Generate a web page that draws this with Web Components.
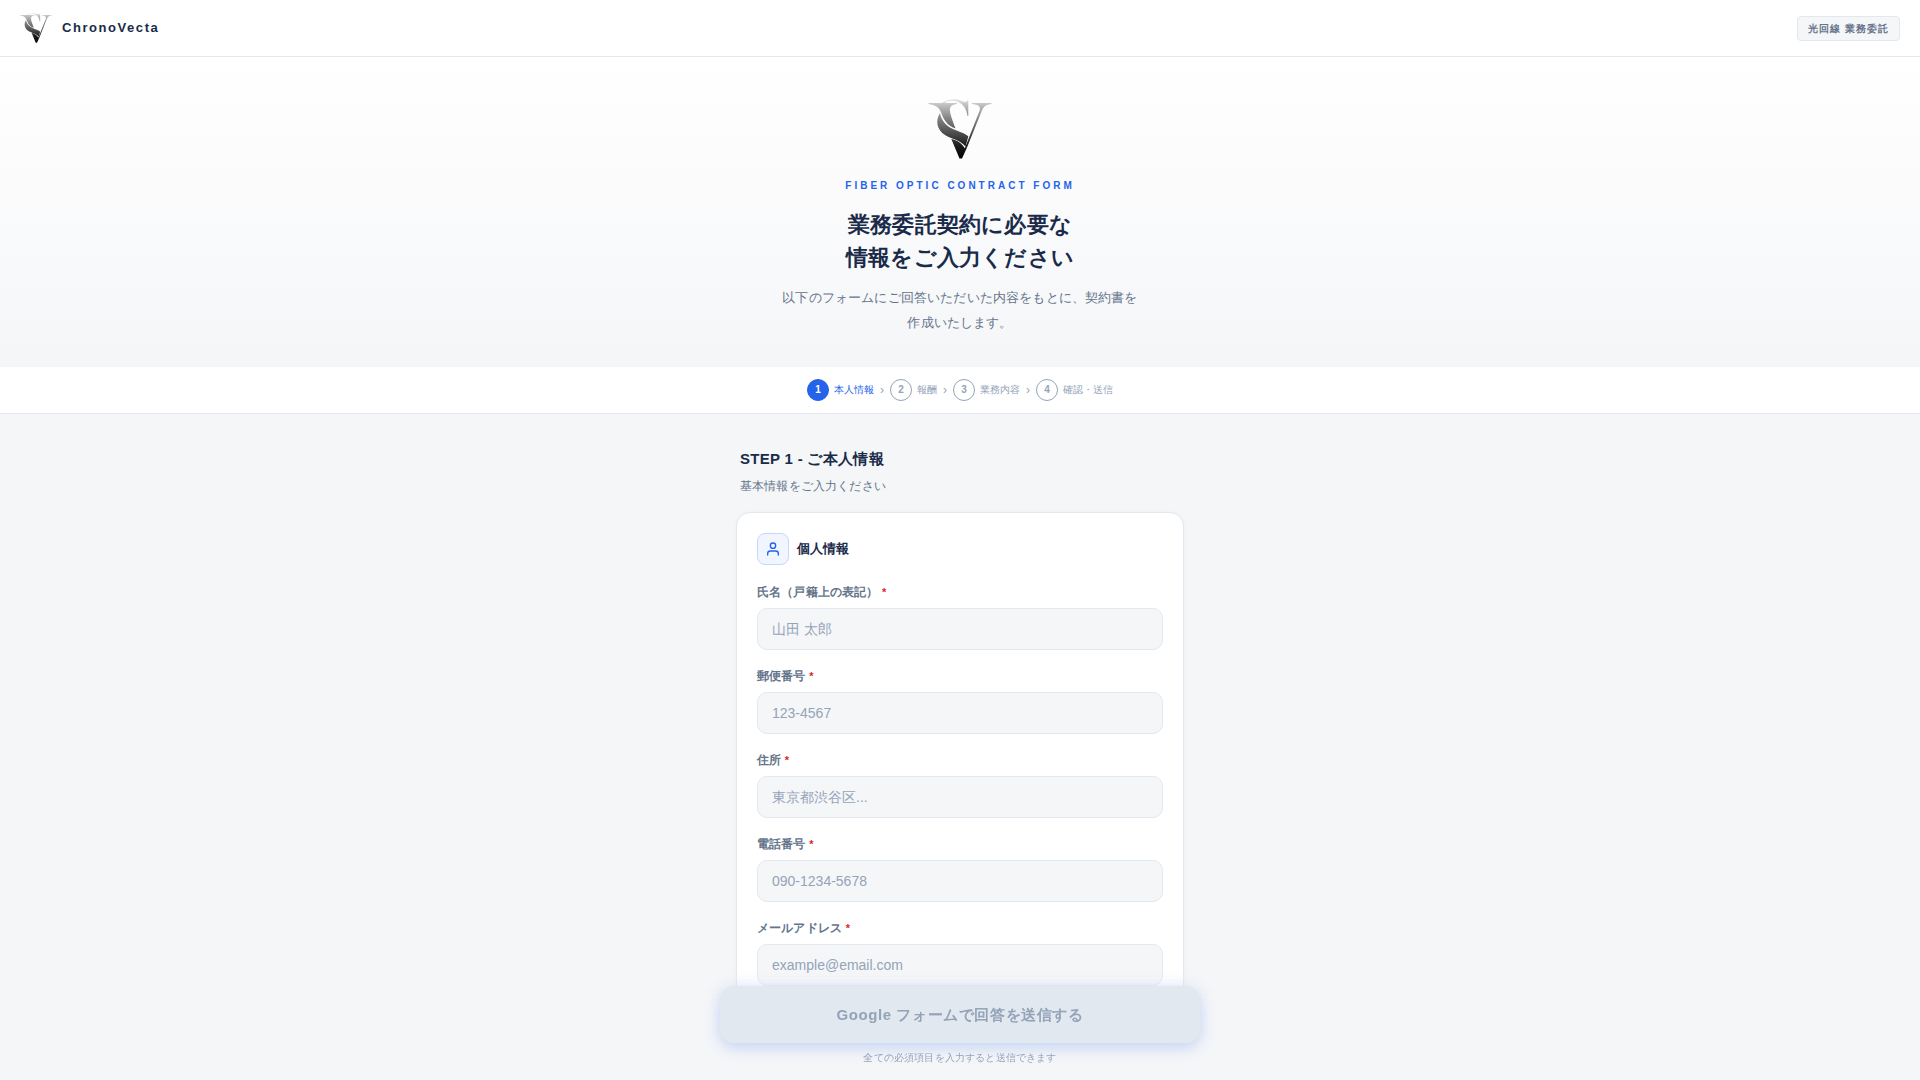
<!DOCTYPE html>
<html lang="ja">
<head>
<meta charset="utf-8">
<meta name="viewport" content="width=device-width, initial-scale=1">
<title>ChronoVecta</title>
<style>
  :root {
    --navy: #1a2b4a;
    --slate: #64748b;
    --muted: #94a3b8;
    --line: #e2e8f0;
    --bg: #f5f6f8;
    --blue: #2563eb;
  }
  body {
    margin: 0;
    background: var(--bg);
    color: var(--navy);
    font-family: "Liberation Sans", sans-serif;
    letter-spacing: 0.01em;
  }
</style>
</head>
<body>
<contract-page></contract-page>

<script>
const define = (name, html, setup) => {
  const template = document.createElement("template");
  template.innerHTML = html;
  customElements.define(name, class extends HTMLElement {
    constructor() {
      super();
      this.attachShadow({ mode: "open" }).append(template.content.cloneNode(true));
    }
    connectedCallback() {
      if (setup) setup(this, this.shadowRoot);
    }
  });
};

define("brand-mark", `
  <style>
    :host { display: block; width: 32px; height: 32px; flex: none; }
    :host([large]) { width: 64px; height: 64px; }
    svg { display: block; width: 100%; height: 100%; }
  </style>
  <svg viewBox="0 0 64 64" aria-hidden="true">
    <defs>
      <linearGradient id="g" gradientUnits="userSpaceOnUse" x1="0" y1="1" x2="0" y2="62">
        <stop offset="0" stop-color="#f0f0f0"/>
        <stop offset="0.1" stop-color="#c4c4c4"/>
        <stop offset="0.35" stop-color="#808080"/>
        <stop offset="0.6" stop-color="#484848"/>
        <stop offset="0.78" stop-color="#1c1c1c"/>
        <stop offset="1" stop-color="#000"/>
      </linearGradient>
    </defs>
    <g fill="url(#g)">
      <path d="M0.500 6H29V7C24 7.500 21.500 9.500 22 14C22.500 19 25.500 26 27.500 31.500C19 28.500 16 23 13.500 16.500C11.500 11 8.500 8 0.500 7Z"/>
      <path d="M14 6C20 2 28 1 34 4C37 5.500 39 5 39.500 3H40.300V19H39.500C38.500 12 35 5.500 27 4C22.500 3.300 18.500 4 16.500 6Z"/>
      <path d="M12 16C13 23 18 29 25 32C31 34.700 37 36 40.300 39.500L37.500 49.500C32 42.500 24 42.500 17 38C9 33 7 23.500 12 16Z"/>
      <path d="M23.300 42C29 43.200 33.500 46 36.800 51.200L38 49L38.800 51L34 61.500H31.500Z"/>
      <path d="M44 6H63.500V7C58 7.500 55.500 9.500 53.500 14.500L38.800 51L37.500 49.500L51.500 14C53 9.500 50.500 7.500 44 7Z"/>
    </g>
  </svg>`);

define("site-header", `
  <style>
    :host {
      display: flex; align-items: center; justify-content: space-between;
      padding: 12px 20px; background: #fff; border-bottom: 1px solid var(--line);
    }
    .brand { display: flex; align-items: center; gap: 10px; }
    .name { font-size: 13px; line-height: 20px; font-weight: 700; letter-spacing: 0.12em; }
    .tag {
      padding: 4px 10px; border: 1px solid var(--line); border-radius: 4px; background: var(--bg);
      color: var(--slate); font-size: 10px; line-height: 15px; font-weight: 600; letter-spacing: 1px;
    }
  </style>
  <div class="brand"><brand-mark></brand-mark><span class="name"><slot></slot></span></div>
  <span class="tag"><slot name="tag"></slot></span>`);

define("page-hero", `
  <style>
    :host {
      display: flex; flex-direction: column; align-items: center; text-align: center;
      padding: 40px 24px 32px; background: linear-gradient(180deg, #fff, var(--bg));
    }
    .eyebrow {
      margin: 17px 0 14px; color: var(--blue);
      font-size: 10px; line-height: 16px; font-weight: 700; letter-spacing: 3px;
    }
    h1 { margin: 0 0 11px; font-size: 22px; line-height: 33px; font-weight: 700; letter-spacing: 0.01em; }
    .lead { margin: 0; max-width: 360px; color: var(--slate); font-size: 13px; line-height: 25px; }
  </style>
  <brand-mark large></brand-mark>
  <p class="eyebrow"><slot name="eyebrow"></slot></p>
  <h1><slot name="title"></slot></h1>
  <p class="lead"><slot></slot></p>`);

define("step-item", `
  <style>
    :host {
      display: flex; align-items: center; gap: 5px;
      color: var(--muted); font-size: 10px; line-height: 16px; letter-spacing: 0;
    }
    :host([active]) { color: var(--blue); }
    .dot {
      display: grid; place-items: center; box-sizing: border-box; width: 22px; height: 22px;
      border: 1px solid currentColor; border-radius: 50%; font-weight: 700;
    }
    :host([active]) .dot { background: var(--blue); border-color: var(--blue); color: #fff; }
  </style>
  <span class="dot"></span><span><slot></slot></span>`,
  (el, root) => { root.querySelector(".dot").textContent = el.getAttribute("number"); });

define("step-bar", `
  <style>
    :host {
      display: flex; align-items: center; justify-content: center; gap: 6px;
      padding: 12px 20px; background: #fff; border-bottom: 1px solid var(--line);
      color: var(--muted);
    }
    .sep { font-size: 12px; line-height: 16px; letter-spacing: 0; }
  </style>
  <step-item number="1" active>本人情報</step-item><span class="sep">›</span>
  <step-item number="2">報酬</step-item><span class="sep">›</span>
  <step-item number="3">業務内容</step-item><span class="sep">›</span>
  <step-item number="4">確認・送信</step-item>`);

define("form-field", `
  <style>
    :host { display: flex; flex-direction: column; gap: 6px; }
    label { color: var(--slate); font-size: 12px; line-height: 20px; font-weight: 600; }
    .req { color: #dc2626; font-size: 11px; }
    input {
      box-sizing: border-box; width: 100%; height: 42px; margin: 0; padding: 0 14px;
      border: 1px solid var(--line); border-radius: 10px; background: var(--bg);
      color: var(--navy); font-family: inherit; font-size: 14px; outline: none;
    }
    input::placeholder { color: var(--muted); opacity: 1; }
    input:focus { border-color: var(--blue); }
  </style>
  <label for="field"><slot></slot> <span class="req">*</span></label>
  <input id="field" required>`,
  (el, root) => {
    const input = root.querySelector("input");
    input.type = el.getAttribute("type") || "text";
    input.placeholder = el.getAttribute("placeholder");
  });

define("form-card", `
  <style>
    :host {
      display: flex; flex-direction: column; gap: 16px; padding: 20px;
      border: 1px solid var(--line); border-radius: 14px; background: #fff;
      box-shadow: 0 1px 4px rgba(26, 43, 74, 0.04);
    }
    header { display: flex; align-items: center; gap: 8px; margin-bottom: 1px; }
    .icon {
      display: grid; place-items: center; box-sizing: border-box; width: 32px; height: 32px;
      border: 1px solid #c7d7fb; border-radius: 8px; background: #f0f5ff;
    }
    svg { display: block; width: 16px; height: 16px; }
    h3 { margin: 0; font-size: 13px; line-height: 20px; font-weight: 700; letter-spacing: 0; }
  </style>
  <header>
    <span class="icon">
      <svg viewBox="0 0 24 24" fill="none" stroke="#2563eb" stroke-width="2" stroke-linecap="round" stroke-linejoin="round" aria-hidden="true">
        <path d="M20 21v-2a4 4 0 0 0-4-4H8a4 4 0 0 0-4 4v2"/><circle cx="12" cy="7" r="4"/>
      </svg>
    </span>
    <h3><slot name="title"></slot></h3>
  </header>
  <slot></slot>`);

define("form-section", `
  <style>
    :host { display: block; box-sizing: border-box; max-width: 480px; margin: 0 auto; padding: 33px 16px 140px; }
    .head { padding: 0 4px; margin-bottom: 16px; }
    h2 { margin: 0 0 5px; font-size: 15px; line-height: 24px; font-weight: 700; letter-spacing: 0.02em; }
    p { margin: 0; color: var(--slate); font-size: 12px; line-height: 20px; }
  </style>
  <div class="head"><h2><slot name="title"></slot></h2><p><slot name="note"></slot></p></div>
  <slot></slot>`);

define("submit-bar", `
  <style>
    :host {
      display: flex; flex-direction: column; align-items: center; gap: 7px;
      position: fixed; left: 0; right: 0; bottom: 0; padding: 16px 16px 14px;
      background: linear-gradient(to top, var(--bg) 60%, transparent);
    }
    button {
      width: 100%; max-width: 480px; padding: 18px; border: 0; border-radius: 14px;
      background: var(--line); color: var(--muted); box-shadow: 0 4px 16px rgba(37, 99, 235, 0.25);
      font-family: inherit; font-size: 15px; line-height: 21px; font-weight: 700; letter-spacing: 0.04em;
    }
    p { margin: 0; color: var(--muted); font-size: 10px; line-height: 16px; }
  </style>
  <button type="submit" disabled><slot></slot></button>
  <p><slot name="note"></slot></p>`);

define("contract-page", `
  <style>:host { display: block; }</style>
  <site-header>ChronoVecta<span slot="tag">光回線 業務委託</span></site-header>
  <page-hero>
    <span slot="eyebrow">FIBER OPTIC CONTRACT FORM</span>
    <span slot="title">業務委託契約に必要な<br>情報をご入力ください</span>
    以下のフォームにご回答いただいた内容をもとに、契約書を作成いたします。
  </page-hero>
  <step-bar></step-bar>
  <form-section>
    <span slot="title">STEP 1 - ご本人情報</span>
    <span slot="note">基本情報をご入力ください</span>
    <form-card>
      <span slot="title">個人情報</span>
      <form-field placeholder="山田 太郎">氏名（戸籍上の表記）</form-field>
      <form-field placeholder="123-4567">郵便番号</form-field>
      <form-field placeholder="東京都渋谷区...">住所</form-field>
      <form-field type="tel" placeholder="090-1234-5678">電話番号</form-field>
      <form-field type="email" placeholder="example@email.com">メールアドレス</form-field>
    </form-card>
  </form-section>
  <submit-bar>Google フォームで回答を送信する<span slot="note">全ての必須項目を入力すると送信できます</span></submit-bar>`);
</script>
</body>
</html>
